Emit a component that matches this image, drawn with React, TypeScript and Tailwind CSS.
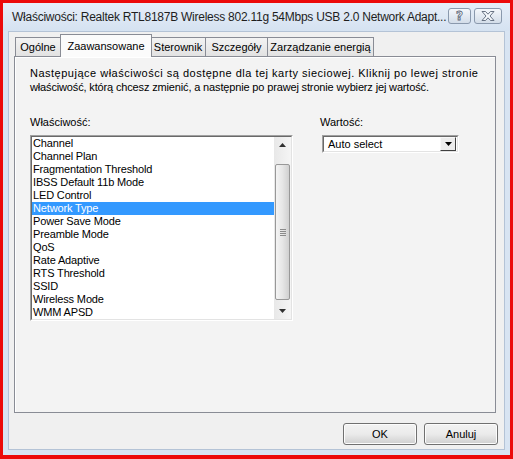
const tabs = [
  { label: 'Ogólne', w: 'w-[46px]' },
  { label: 'Zaawansowane', w: 'w-[92px]', active: true },
  { label: 'Sterownik', w: 'w-[56px]' },
  { label: 'Szczegóły', w: 'w-[63px]' },
  { label: 'Zarządzanie energią', w: 'w-[107px]' },
];

const properties = [
  'Channel',
  'Channel Plan',
  'Fragmentation Threshold',
  'IBSS Default 11b Mode',
  'LED Control',
  'Network Type',
  'Power Save Mode',
  'Preamble Mode',
  'QoS',
  'Rate Adaptive',
  'RTS Threshold',
  'SSID',
  'Wireless Mode',
  'WMM APSD',
];

function TriangleUp() {
  return (
    <svg width="7" height="4" viewBox="0 0 7 4">
      <polygon points="0,4 7,4 3.5,0" fill="#303030" />
    </svg>
  );
}

function TriangleDown({ color = '#303030' }: { color?: string }) {
  return (
    <svg width="7" height="4" viewBox="0 0 7 4">
      <polygon points="0,0 7,0 3.5,4" fill={color} />
    </svg>
  );
}

function CloseGlyph() {
  return (
    <svg width="14" height="10" viewBox="0 0 14 10">
      <polygon
        points="1,0.5 4.5,0.5 7,3.2 9.5,0.5 13,0.5 9,5 13,9.5 9.5,9.5 7,6.8 4.5,9.5 1,9.5 5,5"
        fill="#f4f7fb"
        stroke="#5a6577"
        strokeWidth="0.9"
        strokeLinejoin="round"
      />
    </svg>
  );
}

export default function App() {
  return (
    <div className="w-[513px] h-[459px] border-[3px] border-b-4 border-[#ec0a0a] bg-[#d8e4f2] flex flex-col font-['Liberation_Sans',Arial,sans-serif] text-[11px] text-black overflow-hidden">
      {/* Title bar */}
      <div className="h-[28px] flex bg-gradient-to-b from-[#e6eef8] to-[#d5e2f1]">
        <div className="flex-1 flex items-center pl-[9px] text-[12px] tracking-[-0.25px] text-[#1e1e1e] whitespace-nowrap">
          Właściwości: Realtek RTL8187B Wireless 802.11g 54Mbps USB 2.0 Network Adapt...
        </div>
        <div className="flex gap-[3px] mt-[5px] mr-[8px] h-[16px]">
          <div className="w-[23px] h-[16px] rounded-[3px] border border-[#8a99ad] bg-gradient-to-b from-[#f4f7fb] to-[#d3dde9] flex items-center justify-center">
            <span className="text-[12px] leading-none font-bold text-[#f4f7fb] [-webkit-text-stroke:0.8px_#5a6577] font-['DejaVu_Sans',sans-serif]">?</span>
          </div>
          <div className="w-[28px] h-[16px] rounded-[3px] border border-[#8a99ad] bg-gradient-to-b from-[#f4f7fb] to-[#d3dde9] flex items-center justify-center">
            <CloseGlyph />
          </div>
        </div>
      </div>

      {/* Client area */}
      <div className="mx-[5px] h-[419px] bg-[#f0f0f0] border border-[#b4c3d6] flex flex-col">
        {/* Tabs */}
        <div className="h-[24px] flex items-end pl-[6px]">
          {tabs.map((t) =>
            t.active ? (
              <div
                key={t.label}
                className={`${t.w} h-[23px] -mb-px -mx-[1px] relative z-10 border border-b-0 border-[#898c95] bg-[#fbfbfb] flex items-start justify-center pt-[3px]`}
              >
                {t.label}
              </div>
            ) : (
              <div
                key={t.label}
                className={`${t.w} h-[19px] border border-b-0 border-[#898c95] bg-gradient-to-b from-[#f3f3f3] to-[#e2e2e2] flex items-center justify-center -ml-px first:ml-0`}
              >
                {t.label}
              </div>
            )
          )}
        </div>

        {/* Tab panel */}
        <div className="ml-[5px] w-[482px] h-[357px] border border-[#898c95] bg-[#f3f3f3] shadow-[inset_1px_1px_0_#ffffff] pl-[15px] pt-[9px]">
          <p className="leading-[14px] w-[462px] whitespace-nowrap">
            <span className="block tracking-[0.5px]">
              Następujące właściwości są dostępne dla tej karty sieciowej. Kliknij po lewej stronie
            </span>
            <span className="block tracking-[-0.15px]">
              właściwość, którą chcesz zmienić, a następnie po prawej stronie wybierz jej wartość.
            </span>
          </p>

          <div className="flex mt-[21px]">
            {/* Property list */}
            <div className="w-[263px]">
              <div className="leading-[14px]">Właściwość:</div>
              <div className="mt-[6px] h-[186px] border border-t-[#a0a0a0] border-l-[#a0a0a0] border-r-white border-b-white">
                <div className="h-full border border-t-[#696969] border-l-[#696969] border-r-[#e3e3e3] border-b-[#e3e3e3] bg-white flex">
                  <div className="flex-1">
                    {properties.map((p) => (
                      <div
                        key={p}
                        className={`h-[13px] leading-[13px] pl-[1px] tracking-[-0.15px] whitespace-nowrap ${
                          p === 'Network Type' ? 'bg-[#3399ff] text-white' : ''
                        }`}
                      >
                        {p}
                      </div>
                    ))}
                  </div>
                  {/* Scrollbar */}
                  <div className="w-[17px] bg-gradient-to-r from-[#e8e8e8] to-[#f5f5f5] flex flex-col">
                    <div className="h-[17px] flex items-center justify-center">
                      <TriangleUp />
                    </div>
                    <div className="flex-1 px-[1px] pt-[11px] pb-[3px]">
                      <div className="h-[136px] rounded-[2px] border border-[#989898] bg-gradient-to-r from-[#f4f4f4] via-[#e6e6e6] to-[#d0d0d0] flex flex-col items-center justify-center gap-[1px]">
                        <div className="w-[6px] h-px bg-[#8a8a8a]" />
                        <div className="w-[6px] h-px bg-[#8a8a8a]" />
                        <div className="w-[6px] h-px bg-[#8a8a8a]" />
                        <div className="w-[6px] h-px bg-[#8a8a8a]" />
                      </div>
                    </div>
                    <div className="h-[17px] flex items-center justify-center">
                      <TriangleDown />
                    </div>
                  </div>
                </div>
              </div>
            </div>

            {/* Value */}
            <div className="ml-[27px]">
              <div className="leading-[14px]">Wartość:</div>
              <div className="mt-[6px] ml-[2px] w-[137px] h-[18px] border border-t-[#a0a0a0] border-l-[#a0a0a0] border-r-white border-b-white">
                <div className="h-full border border-t-[#696969] border-l-[#696969] border-r-[#e3e3e3] border-b-[#e3e3e3] bg-white flex items-center">
                  <span className="flex-1 pl-[4px] leading-[14px]">Auto select</span>
                  <div className="w-[16px] h-[14px] mr-[1px] border border-t-[#f8f8f8] border-l-[#f8f8f8] border-r-[#404040] border-b-[#404040] bg-[#ececec] flex items-center justify-center">
                    <TriangleDown color="#000000" />
                  </div>
                </div>
              </div>
            </div>
          </div>
        </div>

        {/* Buttons */}
        <div className="flex justify-end gap-[7px] mt-[10px] pr-[6px]">
          <button className="w-[74px] h-[22px] rounded-[3px] border border-[#707070] bg-gradient-to-b from-[#f2f2f2] via-[#ebebeb] to-[#cfcfcf] shadow-[inset_0_0_0_1px_#fcfcfc] text-[11px]">
            OK
          </button>
          <button className="w-[74px] h-[22px] rounded-[3px] border border-[#707070] bg-gradient-to-b from-[#f2f2f2] via-[#ebebeb] to-[#cfcfcf] shadow-[inset_0_0_0_1px_#fcfcfc] text-[11px]">
            Anuluj
          </button>
        </div>
      </div>
    </div>
  );
}
